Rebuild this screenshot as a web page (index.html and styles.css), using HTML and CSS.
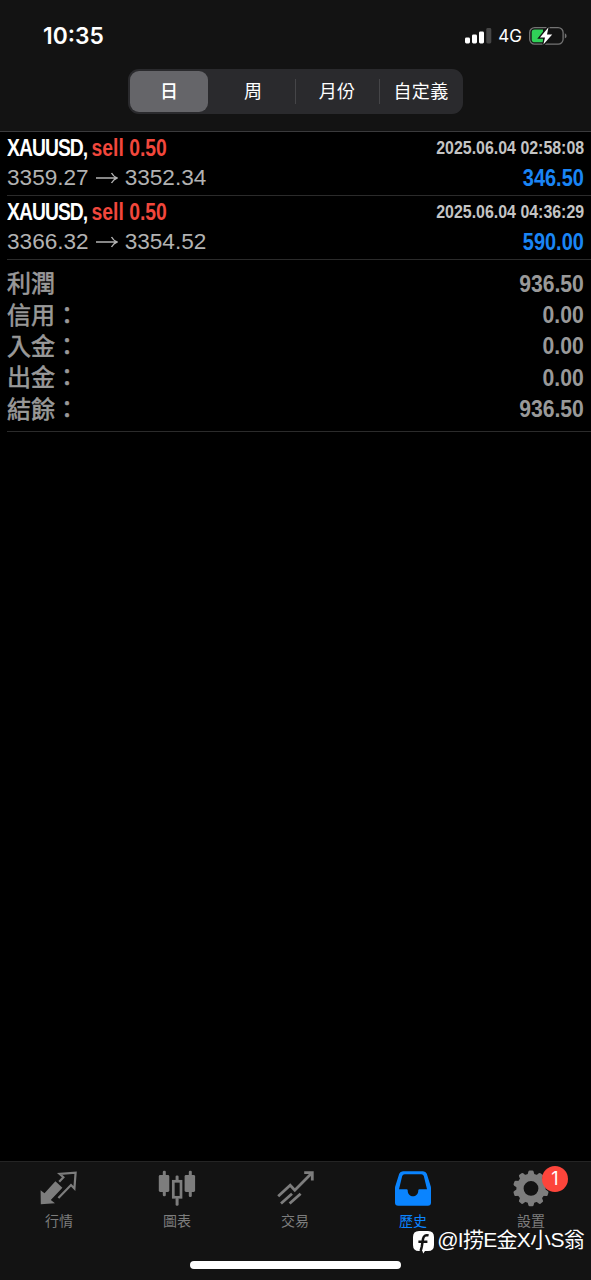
FILE: index.html
```html
<!DOCTYPE html>
<html lang="zh-Hant">
<head>
    <meta charset="UTF-8">
    <meta name="viewport" content="width=device-width, initial-scale=1.0">
    <title>歷史</title>
    <link rel="stylesheet" href="styles.css">
</head>
<body>
    <div class="app">
        <header class="header">
            <div class="status-bar">
                <span class="time">10:35</span>
                <div class="status-icons">
                    <svg class="signal" width="27" height="17" viewBox="0 0 27 17">
                        <rect x="0" y="10.5" width="5" height="6" rx="1.4" fill="#fff"/>
                        <rect x="7" y="7.5" width="5" height="9" rx="1.4" fill="#fff"/>
                        <rect x="14" y="4.5" width="5" height="12" rx="1.4" fill="#fff"/>
                        <rect x="21.3" y="1" width="5" height="15.5" rx="1.4" fill="#464646"/>
                    </svg>
                    <span class="network">4G</span>
                    <svg class="battery" width="38" height="20" viewBox="0 0 38 20">
                        <rect x="0.7" y="1.6" width="33.4" height="16.6" rx="5" fill="none" stroke="#747474" stroke-width="1.3"/>
                        <path d="M5.5 3.6H14V16.2H5.5Q2.7 16.2 2.7 13.4V6.4Q2.7 3.6 5.5 3.6Z" fill="#30d158"/>
                        <path d="M35.8 7.2Q37.6 8 37.6 9.9T35.8 12.6Z" fill="#747474"/>
                        <path d="M19.5 1.2L11 11.4H16L14.4 18.6L23.2 8.4H18Z" fill="#fff" stroke="#131313" stroke-width="2.6" paint-order="stroke"/>
                    </svg>
                </div>
            </div>
            <div class="segmented">
                <button class="segment active">日</button>
                <button class="segment">周</button>
                <button class="segment divided">月份</button>
                <button class="segment divided">自定義</button>
            </div>
        </header>

        <main class="history">
            <div class="deal">
                <div class="deal-row">
                    <span class="symbol">XAUUSD, <span class="sell">sell 0.50</span></span>
                    <span class="date">2025.06.04 02:58:08</span>
                </div>
                <div class="deal-row">
                    <span class="prices">3359.27<svg class="arrow" width="22" height="12" viewBox="0 0 22 12"><path d="M0 6H21M15.5 1Q17.5 4.6 21 6Q17.5 7.4 15.5 11"/></svg>3352.34</span>
                    <span class="amount profit">346.50</span>
                </div>
            </div>
            <div class="deal">
                <div class="deal-row">
                    <span class="symbol">XAUUSD, <span class="sell">sell 0.50</span></span>
                    <span class="date">2025.06.04 04:36:29</span>
                </div>
                <div class="deal-row">
                    <span class="prices">3366.32<svg class="arrow" width="22" height="12" viewBox="0 0 22 12"><path d="M0 6H21M15.5 1Q17.5 4.6 21 6Q17.5 7.4 15.5 11"/></svg>3354.52</span>
                    <span class="amount profit">590.00</span>
                </div>
            </div>
            <div class="summary">
                <div class="summary-row"><span class="label">利潤</span><span class="amount total">936.50</span></div>
                <div class="summary-row"><span class="label">信用：</span><span class="amount total">0.00</span></div>
                <div class="summary-row"><span class="label">入金：</span><span class="amount total">0.00</span></div>
                <div class="summary-row"><span class="label">出金：</span><span class="amount total">0.00</span></div>
                <div class="summary-row"><span class="label">結餘：</span><span class="amount total">936.50</span></div>
            </div>
        </main>

        <nav class="tab-bar">
            <div class="tab">
                <svg width="40" height="40" viewBox="0 0 40 40">
                    <path d="M1.6 21.2L5.5 24.2L16.4 12.2L23.4 18.8L11.8 31L16 34.2L1.8 35.2Z" fill="currentColor"/>
                    <path d="M20.2 12.8L24.4 8.3L20.6 4.8L36.6 3.6L35.4 19.5L32 16L19.4 29" fill="none" stroke="currentColor" stroke-width="2.2"/>
                </svg>
                <span>行情</span>
            </div>
            <div class="tab">
                <svg width="40" height="40" viewBox="0 0 40 40">
                    <g fill="currentColor">
                        <rect x="5.8" y="1.8" width="3" height="25.5" rx="1.3"/>
                        <rect x="1.8" y="6" width="10.5" height="17" rx="1.4"/>
                        <rect x="31.8" y="1.8" width="3" height="26.3" rx="1.3"/>
                        <rect x="27.6" y="6" width="10.5" height="17" rx="1.4"/>
                        <rect x="18.6" y="6.5" width="3" height="6" rx="1.3"/>
                        <rect x="18.6" y="29" width="3" height="7.7" rx="1.3"/>
                    </g>
                    <rect x="16.3" y="12.3" width="7.7" height="16" fill="none" stroke="currentColor" stroke-width="2.7"/>
                </svg>
                <span>圖表</span>
            </div>
            <div class="tab">
                <svg width="40" height="40" viewBox="0 0 40 40">
                    <g fill="none" stroke="currentColor" stroke-width="2.8">
                        <path d="M3.2 27.2L15.2 16.2L19.8 21.2L36.4 4.6"/>
                        <path d="M29.2 3.6H37.3V11.6"/>
                        <path d="M6 34.5L17 24.7M14.6 34.5L25.6 24.7"/>
                    </g>
                </svg>
                <span>交易</span>
            </div>
            <div class="tab current">
                <svg width="40" height="40" viewBox="0 0 40 40">
                    <path fill="currentColor" fill-rule="evenodd" d="M10 2.2H30Q32.8 2.2 33.8 4.8L37.8 17.6Q38 18.4 38 19.3V33.6Q38 36.8 34.8 36.8H5.2Q2 36.8 2 33.6V19.3Q2 18.4 2.2 17.6L6.2 4.8Q7.2 2.2 10 2.2ZM11.7 5.2Q9.8 5.2 9.2 7L6 20.2H13.6Q14.7 20.2 14.7 21.3C14.7 29.3 25.3 29.3 25.3 21.3Q25.3 20.2 26.4 20.2H34L30.8 7Q30.2 5.2 28.3 5.2Z"/>
                </svg>
                <span>歷史</span>
            </div>
            <div class="tab">
                <svg width="40" height="40" viewBox="0 0 40 40">
                    <g fill="currentColor">
                        <path fill-rule="evenodd" d="M20 4.8A14.6 14.6 0 1 1 20 34A14.6 14.6 0 1 1 20 4.8ZM20 12A7.4 7.4 0 1 0 20 26.8A7.4 7.4 0 1 0 20 12Z"/>
                        <g id="teeth">
                            <path id="tooth" d="M16.2 7L17.4 2.6Q17.7 1.5 18.7 1.5H21.3Q22.3 1.5 22.6 2.6L23.8 7Z"/>
                            <use href="#tooth" transform="rotate(36 20 19.4)"/>
                            <use href="#tooth" transform="rotate(72 20 19.4)"/>
                            <use href="#tooth" transform="rotate(108 20 19.4)"/>
                            <use href="#tooth" transform="rotate(144 20 19.4)"/>
                        </g>
                        <use href="#teeth" transform="rotate(180 20 19.4)"/>
                    </g>
                </svg>
                <span>設置</span>
                <span class="badge">1</span>
            </div>
        </nav>
        <div class="home-indicator"></div>

        <div class="watermark">
            <svg width="21" height="23" viewBox="0 0 21 23">
                <path d="M6 0H15Q21 0 21 6V14Q21 20 15 20H12L10.2 22.6L9.4 20H6Q0 20 0 14V6Q0 0 6 0Z" fill="#fff"/>
                <path d="M15.6 4.4Q10.8 3.2 10 8L8.8 15.5Q8.4 17.6 7.6 20M5.4 10.7H14.4" fill="none" stroke="#131313" stroke-width="2.5"/>
            </svg>
            <span>@I捞E金X小S翁</span>
        </div>
    </div>
</body>
</html>
```

FILE: styles.css
```css
* {
    box-sizing: border-box;
}
body {
    margin: 0;
    background: #000;
    color: #fff;
    font-family: "Liberation Sans", "Noto Sans CJK TC", sans-serif;
}
.app {
    position: relative;
    display: flex;
    flex-direction: column;
    width: 100%;
    height: 1280px;
    overflow: hidden;
}
.header {
    height: 132px;
    background: #131313;
    border-bottom: 1px solid #3a3a3c;
}
.status-bar {
    display: flex;
    justify-content: space-between;
    align-items: center;
    height: 69px;
    padding: 2px 24px 0 43px;
}
.time {
    font-family: Inter, sans-serif;
    font-size: 22.8px;
    font-weight: 600;
}
.status-icons {
    display: flex;
    align-items: center;
}
.network {
    margin: 0 7px 0 6px;
    font-family: Inter, sans-serif;
    font-size: 17px;
    font-weight: 400;
}
.segmented {
    display: flex;
    width: 335px;
    height: 45px;
    margin: 0 auto;
    padding: 2px;
    border-radius: 11px;
    background: #2a2a2d;
}
.segment {
    position: relative;
    flex: 0 0 84px;
    padding: 0 0 3px;
    border: none;
    border-radius: 9px;
    background: none;
    color: #fff;
    font-family: "Noto Sans CJK TC", sans-serif;
    font-size: 18px;
}
.segment.active {
    flex: 0 0 78px;
    margin-right: 3px;
    background: #656569;
    font-weight: 500;
}
.segment.divided {
    letter-spacing: 0.3px;
}
.segment.divided::before {
    content: "";
    position: absolute;
    left: 0;
    top: 8px;
    width: 1px;
    height: 25px;
    background: #454548;
}
.history {
    flex: 1;
    padding-left: 7px;
}
.deal {
    height: 64px;
    padding: 1px 7px 0 0;
    border-bottom: 1px solid #2b2b2b;
}
.deal-row {
    display: flex;
    justify-content: space-between;
    align-items: center;
    height: 30px;
    white-space: nowrap;
}
.symbol {
    font-size: 23px;
    font-weight: bold;
    letter-spacing: -1.15px;
    transform: scaleX(0.84);
    transform-origin: left;
}
.sell {
    color: #f2473c;
    letter-spacing: 0;
}
.date {
    color: #c4c4c4;
    font-size: 18px;
    font-weight: bold;
    transform: scaleX(0.885);
    transform-origin: right;
}
.prices {
    display: flex;
    align-items: center;
    color: #b2b2b2;
    font-size: 22.6px;
}
.arrow {
    margin: 0 7px 0 7px;
    fill: none;
    stroke: #b2b2b2;
    stroke-width: 1.4;
}
.amount {
    font-size: 23.5px;
    font-weight: bold;
    transform: scaleX(0.85);
    transform-origin: right;
}
.profit {
    color: #1a85f5;
}
.total {
    transform: scaleX(0.9);
}
.summary {
    padding: 8px 7px 6px 0;
    border-bottom: 1px solid #2b2b2b;
    color: #999;
}
.summary-row {
    display: flex;
    justify-content: space-between;
    align-items: center;
    height: 31.4px;
    font-size: 24px;
    line-height: 31px;
}
.label {
    -webkit-text-stroke: 0.6px #999;
}
.total {
    padding-top: 1px;
}
.tab-bar {
    display: flex;
    height: 119px;
    padding: 7px 1px 0 0;
    border-top: 1px solid #242424;
    background: #131313;
}
.tab {
    position: relative;
    flex: 1;
    display: flex;
    flex-direction: column;
    align-items: center;
    color: #7d7d7d;
    font-family: "Noto Sans CJK TC", sans-serif;
    font-size: 14px;
    line-height: 20px;
}
.tab svg {
    margin-bottom: 1px;
}
.tab.current {
    color: #0a84ff;
}
.badge {
    position: absolute;
    top: -3px;
    left: 70px;
    width: 26px;
    height: 26px;
    border-radius: 50%;
    background: #fd453b;
    color: #fff;
    font-family: Inter, sans-serif;
    font-size: 18px;
    line-height: 26px;
    text-align: center;
}
.home-indicator {
    position: absolute;
    left: 190px;
    bottom: 11px;
    width: 211px;
    height: 8px;
    border-radius: 4px;
    background: #fff;
}
.watermark {
    position: absolute;
    right: 7px;
    bottom: 25px;
    display: flex;
    align-items: center;
    gap: 3px;
    font-family: "Liberation Sans", "Noto Sans CJK SC", sans-serif;
    font-size: 21px;
    line-height: 30px;
    letter-spacing: -0.7px;
    white-space: nowrap;
}
.watermark svg {
    margin-top: 5px;
}
```
